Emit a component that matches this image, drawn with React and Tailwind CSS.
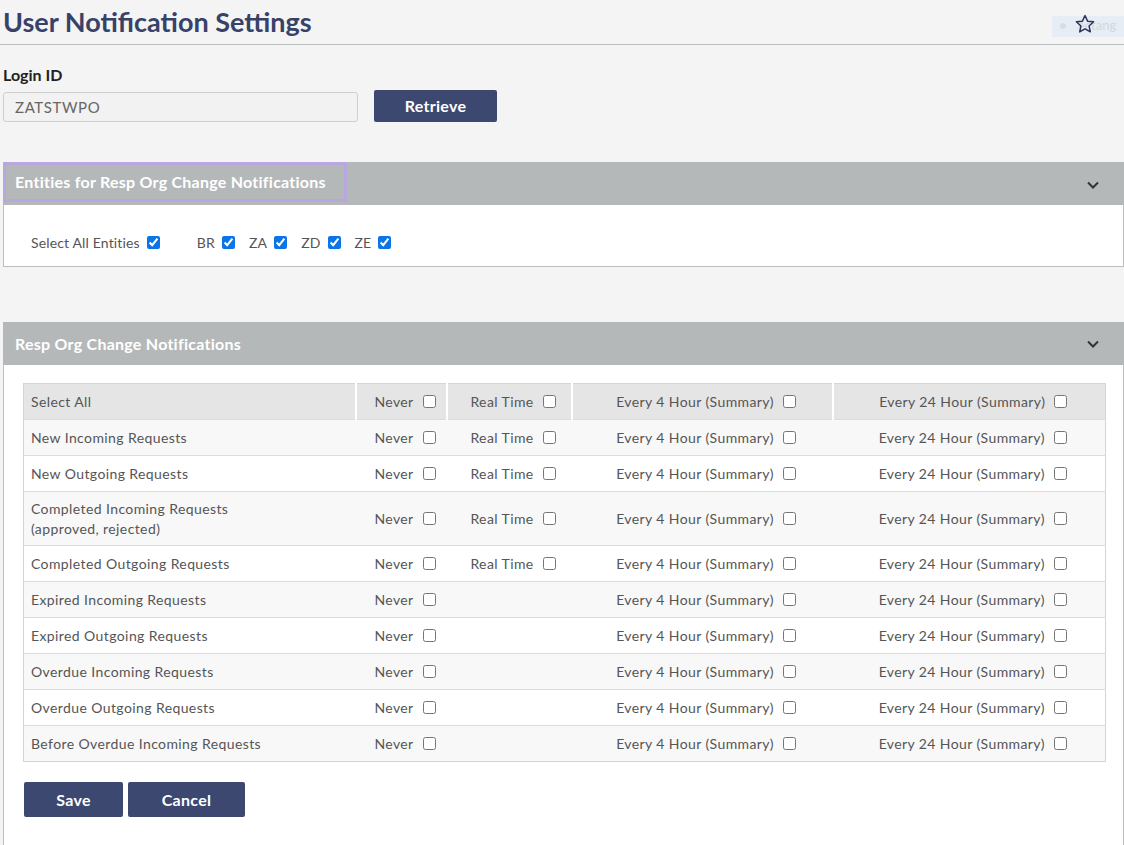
import { useState } from 'react';

const rows = [
  { label: 'New Incoming Requests', realTime: true },
  { label: 'New Outgoing Requests', realTime: true },
  { label: ['Completed Incoming Requests', '(approved, rejected)'], realTime: true },
  { label: 'Completed Outgoing Requests', realTime: true },
  { label: 'Expired Incoming Requests' },
  { label: 'Expired Outgoing Requests' },
  { label: 'Overdue Incoming Requests' },
  { label: 'Overdue Outgoing Requests' },
  { label: 'Before Overdue Incoming Requests' },
];

const entities = ['BR', 'ZA', 'ZD', 'ZE'];

function Chevron() {
  return (
    <svg width="14" height="10" viewBox="0 0 14 10" fill="none" stroke="#333" strokeWidth="2">
      <path d="M2 2.5l5 5 5-5" />
    </svg>
  );
}

function Box({ checked, tight }) {
  return (
    <input
      type="checkbox"
      defaultChecked={checked}
      className={`${tight ? 'ml-[7px]' : 'ml-[9px]'} h-[13px] w-[13px] align-middle accent-[#0b75e8]`}
    />
  );
}

function Option({ text, withBox = true }) {
  return (
    <td className="text-center">
      {withBox && (
        <span className="inline-flex items-center pl-2">
          {text}
          <Box />
        </span>
      )}
    </td>
  );
}

export default function App() {
  const [loginId, setLoginId] = useState('ZATSTWPO');

  return (
    <div className="min-h-[845px] bg-[#f4f4f4] font-['Lato',sans-serif] text-[#333]">
      {/* page title */}
      <div className="flex h-[45px] items-center justify-between border-b border-[#b9bdbe] pl-[3px]">
        <h1 className="text-[27px] font-bold text-[#384268]">User Notification Settings</h1>
        <div className="relative mt-[8px] flex h-[21px] w-[72px] items-center bg-[#e7edf5] pl-2">
          <span className="h-[6px] w-[6px] rounded-full bg-[#d8dde3]" />
          <span className="ml-3 text-[13px] text-[#d2d7de]">ectang</span>
          <svg className="absolute left-[22px] top-[-3px]" width="22" height="22" viewBox="0 0 24 24" fill="none" stroke="#2c3557" strokeWidth="1.6" strokeLinejoin="round">
            <path d="M12 2.8l2.8 6.1 6.6.7-5 4.5 1.4 6.5L12 17.3l-5.8 3.3 1.4-6.5-5-4.5 6.6-.7z" />
          </svg>
        </div>
      </div>

      {/* login */}
      <div className="pl-[3px] pt-[18px]">
        <label className="block text-[16px] font-bold text-[#222]">Login ID</label>
        <div className="mt-[3px] flex items-end gap-[16px]">
          <input
            value={loginId}
            onChange={e => setLoginId(e.target.value)}
            className="h-[30px] w-[355px] rounded-[3px] border border-[#cfcfcf] bg-[#f2f2f2] px-[11px] text-[15px] tracking-[0.6px] text-[#666] outline-none"
          />
          <button className="h-[32px] w-[123px] rounded-[2px] bg-[#3d4870] text-[16px] font-bold tracking-[0.3px] text-white">
            Retrieve
          </button>
        </div>
      </div>

      {/* entities */}
      <div className="ml-[3px] mt-[40px]">
        <div className="flex h-[43px] items-start justify-between bg-[#b4b8b9]">
          <div className="flex h-[40px] w-[344px] items-center border-[3px] border-[#b9a7e0] pl-[9px] text-[16px] font-bold tracking-[0.25px] text-white">
            Entities for Resp Org Change Notifications
          </div>
          <span className="mr-[24px] mt-[18px]"><Chevron /></span>
        </div>
        <div className="flex h-[62px] items-center gap-[37px] border-b border-l border-r border-[#bdbdbd] bg-white pl-[27px] pt-[13px] text-[14px] tracking-[0.15px] text-[#555]">
          <span className="inline-flex items-center">Select All Entities<Box checked tight /></span>
          <div className="flex items-center gap-[14px]">
            {entities.map(e => (
              <span key={e} className="inline-flex items-center">{e}<Box checked tight /></span>
            ))}
          </div>
        </div>
      </div>

      {/* notifications */}
      <div className="ml-[3px] mt-[55px]">
        <div className="flex h-[43px] items-center justify-between bg-[#b4b8b9] pl-[12px]">
          <span className="text-[16px] font-bold tracking-[0.25px] text-white">Resp Org Change Notifications</span>
          <span className="mr-[24px]"><Chevron /></span>
        </div>
        <div className="border-b border-l border-r border-[#bdbdbd] bg-white pb-[28px] pl-[19px] pt-[18px]">
          <table className="w-[1082px] table-fixed border-collapse border border-[#d4d4d4] text-[14px] tracking-[0.4px] text-[#555]">
            <colgroup>
              <col className="w-[332px]" />
              <col className="w-[91px]" />
              <col className="w-[125px]" />
              <col className="w-[261px]" />
              <col className="w-[273px]" />
            </colgroup>
            <thead>
              <tr className="h-[36px] bg-[#e5e5e5]">
                <td className="border-r-2 border-white pl-[7px]">Select All</td>
                <td className="border-r-2 border-white text-center"><span className="inline-flex items-center pl-2">Never<Box /></span></td>
                <td className="border-r-2 border-white text-center"><span className="inline-flex items-center pl-2">Real Time<Box /></span></td>
                <td className="border-r-2 border-white text-center"><span className="inline-flex items-center pl-2">Every 4 Hour (Summary)<Box /></span></td>
                <td className="text-center"><span className="inline-flex items-center pl-2">Every 24 Hour (Summary)<Box /></span></td>
              </tr>
            </thead>
            <tbody>
              {rows.map((r, i) => (
                <tr
                  key={i}
                  className={`${Array.isArray(r.label) ? 'h-[54px]' : 'h-[36px]'} ${i % 2 === 0 ? 'bg-[#f8f8f8]' : 'bg-white'} border-t border-[#dcdcdc]`}
                >
                  <td className="pl-[7px] leading-[20px]">
                    {Array.isArray(r.label) ? (
                      <>
                        {r.label[0]}
                        <br />
                        {r.label[1]}
                      </>
                    ) : (
                      r.label
                    )}
                  </td>
                  <Option text="Never" />
                  <Option text="Real Time" withBox={!!r.realTime} />
                  <Option text="Every 4 Hour (Summary)" />
                  <Option text="Every 24 Hour (Summary)" />
                </tr>
              ))}
            </tbody>
          </table>
          <div className="mt-[20px] flex gap-[5px] pl-[1px]">
            <button className="h-[35px] w-[99px] rounded-[2px] bg-[#3d4870] text-[16px] font-bold tracking-[0.3px] text-white">Save</button>
            <button className="h-[35px] w-[117px] rounded-[2px] bg-[#3d4870] text-[16px] font-bold tracking-[0.3px] text-white">Cancel</button>
          </div>
        </div>
      </div>
    </div>
  );
}
